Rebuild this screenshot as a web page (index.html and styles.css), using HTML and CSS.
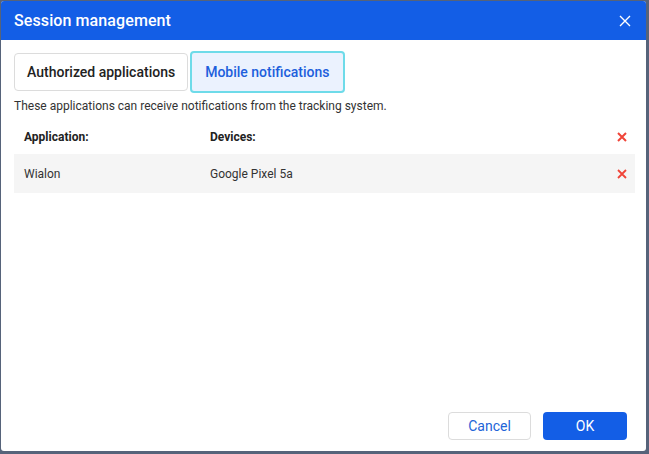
FILE: index.html
```html
<!DOCTYPE html>
<html>
<head>
<meta charset="utf-8">
<link rel="stylesheet" href="styles.css">
</head>
<body>
<div class="dialog">
  <div class="header">
    <span class="title">Session management</span>
    <svg class="close" width="12" height="12" viewBox="0 0 12 12"><path d="M1 1L11 11M11 1L1 11" stroke="#fff" stroke-width="1.4" fill="none"/></svg>
  </div>
  <div class="content">
    <div class="tabs">
      <div class="tab">Authorized applications</div>
      <div class="tab active">Mobile notifications</div>
    </div>
    <p class="desc">These applications can receive notifications from the tracking system.</p>
    <div class="table">
      <div class="row head">
        <div class="c1">Application:</div>
        <div class="c2">Devices:</div>
        <div class="c3"><svg width="10" height="10" viewBox="0 0 10 10"><path d="M1 1L9 9M9 1L1 9" stroke="#f04438" stroke-width="2" fill="none"/></svg></div>
      </div>
      <div class="row item">
        <div class="c1">Wialon</div>
        <div class="c2">Google Pixel 5a</div>
        <div class="c3"><svg width="10" height="10" viewBox="0 0 10 10"><path d="M1 1L9 9M9 1L1 9" stroke="#f04438" stroke-width="1.8" fill="none"/></svg></div>
      </div>
    </div>
  </div>
  <div class="footer">
    <button class="btn cancel">Cancel</button>
    <button class="btn ok">OK</button>
  </div>
</div>
</body>
</html>
```
FILE: styles.css
```css
html, body { margin: 0; padding: 0; }
body {
  background: #56637a;
  width: 649px;
  height: 454px;
  overflow: hidden;
  font-family: Roboto, "Liberation Sans", sans-serif;
}
.dialog {
  margin: 1px 0 0 1px;
  width: 645px;
  height: 450px;
  background: #fff;
  border-radius: 3px;
  overflow: hidden;
  display: flex;
  flex-direction: column;
}
.header {
  height: 39px;
  background: #135ee6;
  display: flex;
  align-items: center;
  justify-content: space-between;
  padding: 0 15px 0 13px;
  flex: none;
}
.title {
  color: #fff;
  font-size: 16px;
  font-weight: 500;
  letter-spacing: 0.1px;
}
.close { display: block; margin-top: 1px; }
.content {
  flex: 1;
  padding: 11px 10px 0 13px;
}
.tabs {
  display: flex;
  align-items: center;
  gap: 2px;
  height: 42px;
}
.tab {
  height: 36px;
  box-sizing: content-box;
  border: 1px solid #dcdcdc;
  border-radius: 4px;
  padding: 0 12px;
  display: flex;
  align-items: center;
  font-size: 14px;
  font-weight: 500;
  color: #222;
}
.tab.active {
  height: 38px;
  border: 2px solid #6edbe9;
  background: #ebf2fe;
  color: #1d5fdc;
  padding: 0 13px;
}
.desc {
  margin: 5px 0 0 0;
  font-size: 12px;
  color: #333;
  line-height: 16px;
}
.table { margin-top: 6px; width: 621px; }
.row {
  display: flex;
  align-items: center;
  font-size: 12px;
  color: #333;
}
.row.head { height: 34px; font-weight: 700; color: #222; }
.row.item { height: 39px; background: #f5f5f5; }
.c1 { width: 186px; padding-left: 10px; }
.c2 { flex: 1; }
.c3 { width: 18px; display: flex; align-items: center; }
.c3 svg { display: block; }
.footer {
  flex: none;
  display: flex;
  justify-content: flex-end;
  gap: 12px;
  padding: 0 19px 11px 0;
}
.btn {
  height: 28px;
  border-radius: 4px;
  font-family: Roboto, "Liberation Sans", sans-serif;
  font-size: 14px;
  cursor: pointer;
}
.cancel {
  width: 83px;
  background: #fff;
  border: 1px solid #dcdcdc;
  color: #2364d8;
}
.ok {
  width: 84px;
  background: #135ee6;
  border: none;
  color: #fff;
}
```
